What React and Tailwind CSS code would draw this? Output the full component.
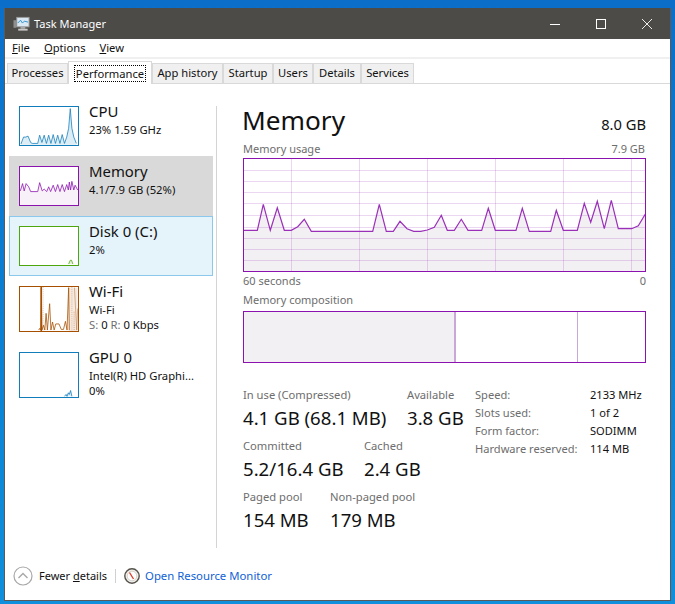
const usage = '243,230.3 257.3,230.3 263.3,204.3 270.3,230.3 277.3,207.7 284.3,230.3 291.3,230.3 297.7,226.7 304.3,219.3 311.3,231.3 372.7,231.3 379.3,204.3 386.3,231.3 393.3,231.3 400,221.3 407,228.7 413.7,231.3 420.7,231.3 427.3,230 434.3,227.3 441.3,215.3 447.3,230.3 454.3,230.3 461.3,219.3 468,230.3 481.7,230.3 488.3,208.3 495.3,230.3 516,230.3 522.3,208.3 529.3,231.3 550.7,231.3 556.3,210.3 563.3,230.3 577.3,230.3 584.3,203.3 590.7,222.3 597.3,201.3 604.3,228.7 611.3,200.3 618.3,228.7 631.7,228.7 638.3,225.7 646,213'

const tabs = [
  ['Processes', 'w-[61px]'],
  ['Performance', 'w-[84px]'],
  ['App history', 'w-[71px]'],
  ['Startup', 'w-[50px]'],
  ['Users', 'w-[40px]'],
  ['Details', 'w-[48px]'],
  ['Services', 'w-[53px]'],
]

function Thumb({ color, box, fill, line, opacity = 0.14, className, children }) {
  return (
    <svg viewBox={box} preserveAspectRatio="none" className={`w-[60px] shrink-0 border ${className}`} style={{ borderColor: color }}>
      {fill && <polygon points={fill} fill={color} fillOpacity={opacity} />}
      <polyline points={line} fill="none" stroke={color} strokeWidth="2.4" />
      {children}
    </svg>
  )
}

function Device({ title, lines, className = '', h = 'h-[60px]', titleClass = 'mt-[-5px] leading-[21px]', thumb }) {
  return (
    <div className={`flex ${h} pl-[10px] pt-[10px] ${className}`}>
      {thumb}
      <div className="ml-[10px] min-w-0 text-[11.25px] leading-[15px] text-[#111]">
        <div className={`text-[14.9px] ${titleClass}`}>{title}</div>
        {lines.map((l, i) => <div key={i} className="whitespace-nowrap">{l}</div>)}
      </div>
    </div>
  )
}

function Stat({ label, value, w }) {
  return (
    <div className={w}>
      <div className="h-[16px] text-[11.2px] leading-[16px] text-[#6d6d6d] whitespace-nowrap">{label}</div>
      <div className="mt-[2px] h-[26px] text-[18.6px] leading-[26px] text-[#111] whitespace-nowrap">{value}</div>
    </div>
  )
}

function UsageGraph() {
  const rows = [170.5, 181.5, 192.5, 203.5, 215.5, 227.5, 238.5, 249.5, 260.5]
  const cols = [291.5, 359.5, 427.5, 495.5, 563.5, 631.5]
  return (
    <svg viewBox="244 159 401 112" className="h-[114px] w-[403px] border border-[#8b12ae]">
      <polygon points={`${usage} 646,272 243,272`} fill="#f3f0f4" />
      {rows.map((y) => <line key={y} x1="243" x2="646" y1={y} y2={y} stroke="#8b12ae" strokeOpacity="0.17" />)}
      {cols.map((x) => <line key={x} x1={x} x2={x} y1="158" y2="272" stroke="#8b12ae" strokeOpacity="0.17" />)}
      <polyline points={usage} fill="none" stroke="#9a30b8" strokeWidth="1.2" />
    </svg>
  )
}

export default function App() {
  return (
    <div className="h-[604px] w-[675px] overflow-hidden bg-gradient-to-b from-[#0b6fc9] to-[#0f8fdc] pl-[4px] pt-[8px] font-['Noto_Sans',sans-serif]">
      <div className="flex h-[593px] w-[667px] flex-col border border-t-0 border-[#5a5a58] bg-white">
        {/* Title bar */}
        <div className="flex h-[31px] shrink-0 items-center bg-[#4d4b48] text-white">
          <svg viewBox="0 0 18 16" className="ml-[8px] mt-[1px] h-[16px] w-[17px]">
            <rect x="0.5" y="4" width="3" height="8" fill="#8f8f8f" />
            <rect x="4" y="1" width="13" height="10" fill="#d9e8f2" stroke="#9a9a9a" />
            <polyline points="5,7 8,4 10,7 12,5 16,6" fill="none" stroke="#2d8fd0" />
            <rect x="8" y="11" width="5" height="2" fill="#a8a8a8" />
            <rect x="5.5" y="13" width="10" height="2" fill="#c8c8c8" />
          </svg>
          <span className="ml-[4px] pt-[1px] text-[11px]">Task Manager</span>
          <div className="ml-auto flex pt-[1px]">
            <div className="flex w-[46px] justify-center">
              <svg viewBox="0 0 10 10" className="h-[10px] w-[10px]"><line x1="0" x2="10" y1="5.5" y2="5.5" stroke="#fff" /></svg>
            </div>
            <div className="flex w-[46px] justify-center">
              <svg viewBox="0 0 10 10" className="h-[10px] w-[10px]"><rect x="0.5" y="0.5" width="9" height="9" fill="none" stroke="#fff" /></svg>
            </div>
            <div className="flex w-[46px] justify-center">
              <svg viewBox="0 0 10 10" className="h-[10px] w-[10px]"><path d="M0 0L10 10M10 0L0 10" stroke="#fff" strokeWidth="0.9" /></svg>
            </div>
          </div>
        </div>

        {/* Menu */}
        <div className="flex h-[20px] shrink-0 items-center gap-[14px] border-b-2 border-[#f0f0f0] pl-[7px] pt-[1px] text-[11.2px] text-[#111]">
          <span><u>F</u>ile</span>
          <span><u>O</u>ptions</span>
          <span><u>V</u>iew</span>
        </div>

        {/* Tabs */}
        <div className="flex h-[25px] shrink-0 items-end border-b border-[#d9d9d9] pl-[2px] text-[11.2px] text-[#111]">
          {tabs.map(([t, w]) => t === 'Performance' ? (
            <div key={t} className={`${w} relative z-10 mb-[-1px] flex h-[23px] items-center justify-center border border-b-0 border-[#d9d9d9] bg-white`}>
              <span className="border border-dotted border-black px-[1px] leading-[15px]">{t}</span>
            </div>
          ) : (
            <div key={t} className={`${w} flex h-[20px] items-center justify-center border border-b-0 border-[#d9d9d9] bg-[#f0f0f0]`}>{t}</div>
          ))}
        </div>

        {/* Body */}
        <div className="flex min-h-0 flex-1">
          <div className="w-[211px] shrink-0 pl-[4px] pr-[3px] pt-[12px]">
            <Device
              title="CPU"
              lines={['23%  1.59 GHz']}
              thumb={<Thumb color="#117dbb" box="57 33 180 120" className="h-[40px]"
                line="60,150 68,128 75,128 82,125 90,145 95,148 112,148 118,122 125,145 132,122 139,148 146,122 153,148 160,120 167,148 174,122 181,148 188,120 195,148 202,128 208,100 213,38 218,100 224,128 232,148"
                fill="60,150 68,128 75,128 82,125 90,145 95,148 112,148 118,122 125,145 132,122 139,148 146,122 153,148 160,120 167,148 174,122 181,148 188,120 195,148 202,128 208,100 213,38 218,100 224,128 232,148 232,152 60,152" />}
            />
            <Device
              title="Memory"
              lines={['4.1/7.9 GB (52%)']}
              className="bg-[#d9d9d9]"
              thumb={<Thumb color="#8b12ae" box="57 213 180 119" opacity={0.06} className="h-[40px] bg-white"
                line="58,288 65,265 70,288 76,265 84,275 90,290 112,290 118,262 126,288 132,282 140,290 146,275 152,290 160,270 167,290 174,268 181,290 188,268 195,290 202,268 207,285 210,260 214,285 218,258 224,285 228,270 236,285"
                fill="58,288 65,265 70,288 76,265 84,275 90,290 112,290 118,262 126,288 132,282 140,290 146,275 152,290 160,270 167,290 174,268 181,290 188,268 195,290 202,268 207,285 210,260 214,285 218,258 224,285 228,270 236,285 236,332 58,332" />}
            />
            <Device
              title="Disk 0 (C:)"
              lines={['2%']}
              className="border border-[#8cc8ec] bg-[#e5f3fb] !pl-[9px] !pt-[9px]"
              thumb={<Thumb color="#4da60c" box="57 33 180 120" className="h-[40px] bg-white" line="208,150 213,138 217,138 221,150" fill="208,150 213,138 217,138 221,150" />}
            />
            <Device
              title="Wi-Fi"
              lines={['Wi-Fi', <><span className="text-[#6d6d6d]">S:</span> 0 <span className="text-[#6d6d6d]">R:</span> 0 Kbps</>]}
              h="h-[66px]"
              titleClass="mt-[-6px] leading-[22px]"
              thumb={<Thumb color="#a74f01" box="57 213 180 137" opacity={0.12} className="h-[46px]"
                line="115,347 118,342 121,347 123,215 125,347 130,332 134,347 138,295 142,347 149,265 153,347 158,322 163,347 168,328 178,328 185,345 192,345 198,320 203,347 208,215 210,347"
                fill="208,215 236,215 236,350 208,350">
                <line x1="123" x2="123" y1="213" y2="350" stroke="#a74f01" strokeWidth="5" />
                <line x1="129" x2="129" y1="213" y2="350" stroke="#a74f01" strokeWidth="1.5" strokeDasharray="3 3" strokeOpacity="0.6" />
                <line x1="218" x2="218" y1="213" y2="350" stroke="#d67a3c" strokeWidth="2" strokeDasharray="3 3" strokeOpacity="0.7" />
                <line x1="225" x2="225" y1="290" y2="350" stroke="#d67a3c" strokeWidth="2" strokeDasharray="3 3" />
                <polyline points="226,215 233,347 236,280" fill="none" stroke="#b86a2a" strokeWidth="1.5" />
              </Thumb>}
            />
            <Device
              title="GPU 0"
              lines={['Intel(R) HD Graphi...', '0%']}
              h="h-[66px]"
              titleClass="mt-[-6px] leading-[22px]"
              thumb={<Thumb color="#117dbb" box="57 412 180 136" className="h-[46px]" line="195,546 200,540 203,546 207,535 210,540 214,528 218,546" fill="195,546 200,540 203,546 207,535 210,540 214,528 218,546" />}
            />
          </div>

          <div className="mt-[22px] mb-[8px] w-px shrink-0 bg-[#d4d4d4]" />

          {/* Memory panel */}
          <div className="flex w-[429px] flex-col pl-[25px]">
            <div className="mt-[16px] flex h-[40px] w-[404px] items-end justify-between">
              <span className="text-[26.2px] leading-[40px] text-[#111]">Memory</span>
              <span className="mb-[6px] text-[14.7px] leading-[20px] text-[#111]">8.0 GB</span>
            </div>
            <div className="mt-[2px] flex h-[14px] w-[403px] items-center justify-between pl-[1px] text-[11px] text-[#6d6d6d]">
              <span>Memory usage</span>
              <span>7.9 GB</span>
            </div>
            <div className="mt-[2px] pl-[1px]"><UsageGraph /></div>
            <div className="mt-[2px] flex h-[14px] w-[404px] items-center justify-between pl-[1px] text-[11px] text-[#6d6d6d]">
              <span>60 seconds</span>
              <span>0</span>
            </div>
            <div className="mt-[5px] flex h-[14px] items-center pl-[1px] text-[11px] text-[#6d6d6d]">Memory composition</div>
            <div className="mt-[4px] ml-[1px] flex h-[52px] w-[403px] border border-[#8b12ae]">
              <div className="w-[212px] border-r-2 border-[#c9a8d8] bg-[#f3f0f4]" />
              <div className="w-[122px] border-r border-[#c9a8d8]" />
            </div>

            <div className="mt-[24px] flex pl-[1px]">
              <div className="flex w-[232px] flex-col gap-[7px]">
                <div className="flex">
                  <Stat w="w-[164px]" label="In use (Compressed)" value="4.1 GB (68.1 MB)" />
                  <Stat label="Available" value="3.8 GB" />
                </div>
                <div className="flex">
                  <Stat w="w-[121px]" label="Committed" value="5.2/16.4 GB" />
                  <Stat label="Cached" value="2.4 GB" />
                </div>
                <div className="flex">
                  <Stat w="w-[87px]" label="Paged pool" value="154 MB" />
                  <Stat label="Non-paged pool" value="179 MB" />
                </div>
              </div>
              <div className="mt-[-1px] grid h-fit grid-cols-[115px_auto] text-[11.1px] leading-[18px]">
                <span className="text-[#6d6d6d]">Speed:</span><span className="text-[#111]">2133 MHz</span>
                <span className="text-[#6d6d6d]">Slots used:</span><span className="text-[#111]">1 of 2</span>
                <span className="text-[#6d6d6d]">Form factor:</span><span className="text-[#111]">SODIMM</span>
                <span className="text-[#6d6d6d] whitespace-nowrap">Hardware reserved:</span><span className="text-[#111]">114 MB</span>
              </div>
            </div>
          </div>
        </div>

        {/* Footer */}
        <div className="flex h-[44px] shrink-0 items-center pl-[8px] pb-[4px] text-[11px]">
          <svg viewBox="0 0 20 20" className="h-[20px] w-[20px]">
            <circle cx="10" cy="10" r="9" fill="none" stroke="#a8a8a8" strokeWidth="1.2" />
            <polyline points="5.5,12 10,7.5 14.5,12" fill="none" stroke="#a8a8a8" strokeWidth="1.4" />
          </svg>
          <span className="ml-[6px] text-[#111]">Fewer <u>d</u>etails</span>
          <div className="ml-[8px] h-[14px] w-px bg-[#d0d0d0]" />
          <svg viewBox="0 0 16 16" className="ml-[8px] h-[16px] w-[16px]">
            <circle cx="8" cy="8" r="7.2" fill="#f2f0ea" stroke="#55524c" strokeWidth="1.4" />
            <circle cx="8" cy="8" r="4.8" fill="#fff" stroke="#bdb8ac" strokeWidth="0.6" />
            <line x1="5.5" y1="4.5" x2="9.5" y2="11" stroke="#d8402c" strokeWidth="1.4" />
          </svg>
          <span className="ml-[5px] text-[11.35px] text-[#0f62d6]">Open Resource Monitor</span>
        </div>
      </div>
    </div>
  )
}
